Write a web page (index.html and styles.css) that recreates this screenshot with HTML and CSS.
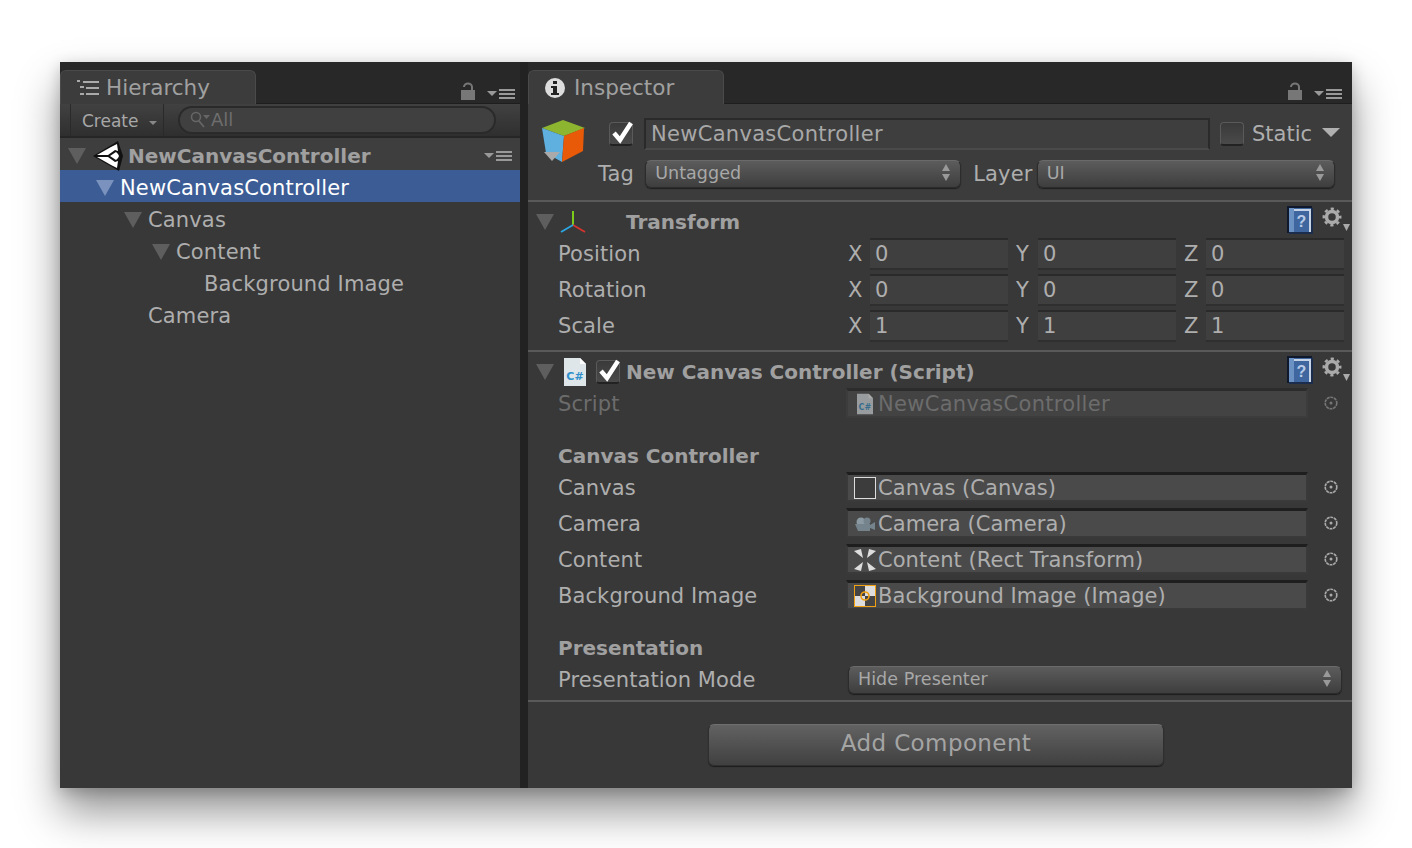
FILE: index.html
```html
<!DOCTYPE html>
<html lang="en">
<head>
    <meta charset="UTF-8">
    <title>Unity Inspector</title>
    <link rel="stylesheet" href="styles.css">
</head>
<body>

<svg class="sprites" width="0" height="0">
    <symbol id="lock" viewBox="0 0 16 18">
        <path d="M4 5a4 3.500 0 0 1 8 0v3" fill="none" stroke="#777" stroke-width="2"/>
        <rect x="1" y="8" width="14" height="10" fill="#777"/>
    </symbol>
    <symbol id="menu" viewBox="0 0 28 12">
        <path d="M0 3h10l-5 5z" fill="#999"/>
        <path d="M12 1h16v2H12zM12 5h16v2H12zM12 9h16v2H12z" fill="#999"/>
    </symbol>
    <symbol id="help" viewBox="0 0 26 28">
        <rect x="0" y="0" width="25" height="27" fill="#10192c"/>
        <rect x="2" y="2" width="24" height="26" fill="#1c2c4c"/>
        <rect x="2" y="2" width="22" height="24" fill="#3f669f"/>
        <rect x="2" y="2" width="5" height="24" fill="#6c92c4"/>
        <path d="M7 3h17v2H7z" fill="#c7d4e6"/>
        <rect x="22" y="3" width="2" height="23" fill="#c7d4e6"/>
        <text x="14.500" y="21" font-family="Liberation Sans" font-size="16" font-weight="bold" text-anchor="middle" fill="#b9cbe6">?</text>
    </symbol>
    <symbol id="gear" viewBox="0 0 28 26">
        <circle cx="10" cy="10" r="5.500" fill="none" stroke="#aaa" stroke-width="3.500"/>
        <circle cx="10" cy="10" r="8.200" fill="none" stroke="#aaa" stroke-width="2.500" stroke-dasharray="3.220 3.220" stroke-dashoffset="1.600"/>
        <path d="M21 17h7l-3.500 7z" fill="#aaa"/>
    </symbol>
    <symbol id="csfile" viewBox="0 0 22 28">
        <path d="M0 0h16l6 6v22H0z" fill="#dfe6ea"/>
        <path d="M16 0l6 6h-6z" fill="#fff"/>
        <text x="11" y="22" font-family="DejaVu Sans" font-size="11" font-weight="bold" text-anchor="middle" fill="#2f8fca">C#</text>
    </symbol>
    <symbol id="target" viewBox="0 0 14 14">
        <circle cx="7" cy="7" r="5.800" fill="none" stroke="#aaa" stroke-width="1.600" stroke-dasharray="3 .7"/>
        <circle cx="7" cy="7" r="1.500" fill="#aaa"/>
    </symbol>
    <symbol id="tick" viewBox="0 0 26 26">
        <path d="M5 13l6 7L22 3" fill="none" stroke="#fff" stroke-width="4.500"/>
    </symbol>
    <symbol id="updown" viewBox="0 0 10 18">
        <path d="M5 0l4 7H1zM1 10h8l-4 7z" fill="#999"/>
    </symbol>
</svg>

<div class="window">
    <section class="panel hierarchy">
        <div class="tabbar">
            <div class="tab tab-hierarchy">
                <svg class="tab-icon" viewBox="0 0 22 16" width="22" height="16">
                    <path d="M0 0h3v2H0zM3 6h4v2H3zM3 13h4v2H3z" fill="#aaa"/>
                    <path d="M6 1h16v2H6zM9 7h13v2H9zM9 13h13v2H9z" fill="#aaa"/>
                </svg>
                Hierarchy
            </div>
            <div class="tab-tools">
                <svg class="lock" width="16" height="18"><use href="#lock"/></svg>
                <svg class="menu" width="28" height="12"><use href="#menu"/></svg>
            </div>
        </div>
        <div class="toolbar">
            <div class="create">Create <span class="small-arrow"></span></div>
            <div class="search">
                <svg class="search-icon" viewBox="0 0 22 18" width="22" height="18">
                    <circle cx="7" cy="7" r="4.500" fill="none" stroke="#666" stroke-width="1.600"/>
                    <path d="M10 11l5 6" stroke="#666" stroke-width="1.800"/>
                    <path d="M14 5h7l-3.500 4z" fill="#666"/>
                </svg>
                All
            </div>
        </div>
        <div class="scene-row">
            <span class="arrow"></span>
            <svg class="unity-logo" viewBox="0 0 30 30" width="30" height="30">
                <path d="M0 15L25 0l5 15-4 15z" fill="#111"/>
                <path d="M4 14L18 6l6-3 1 7-3-1-7 5zM4 16h11l7 5 3-1-1 7-6-3zM17 15l6-4 2 2 1 2-1 2-2 2z" fill="#fff"/>
            </svg>
            <span class="scene-name">NewCanvasController</span>
            <svg class="menu" width="28" height="12"><use href="#menu"/></svg>
        </div>
        <div class="tree-row selected depth-1"><span class="arrow"></span>NewCanvasController</div>
        <div class="tree-row depth-2"><span class="arrow"></span>Canvas</div>
        <div class="tree-row depth-3"><span class="arrow"></span>Content</div>
        <div class="tree-row depth-4">Background Image</div>
        <div class="tree-row depth-2 leaf">Camera</div>
    </section>

    <section class="panel inspector">
        <div class="tabbar">
            <div class="tab tab-inspector">
                <svg class="tab-icon" viewBox="0 0 20 20" width="20" height="20">
                    <circle cx="10" cy="10" r="10" fill="#ddd"/>
                    <path d="M8 3h4v3H8zM6 8h6v7h2v2H6v-2h2v-5H6z" fill="#222"/>
                </svg>
                Inspector
            </div>
            <div class="tab-tools">
                <svg class="lock" width="16" height="18"><use href="#lock"/></svg>
                <svg class="menu" width="28" height="12"><use href="#menu"/></svg>
            </div>
        </div>

        <div class="object-head">
            <svg class="cube" viewBox="0 0 44 44" width="44" height="44">
                <path d="M1 8L22 0l22 8-21 8z" fill="#8db52f"/>
                <path d="M1 8l22 8-2 26L5 33z" fill="#5fb0df"/>
                <path d="M23 16L43 8l-1 23-21 11z" fill="#e85a08"/>
                <path d="M3 32h16l-8 9z" fill="#aaa"/>
            </svg>
            <div class="head-lines">
                <div class="head-line">
                    <span class="check on"><svg width="26" height="26"><use href="#tick"/></svg></span>
                    <div class="name-field">NewCanvasController</div>
                    <span class="check"></span>
                    <span class="static-label">Static</span>
                    <span class="static-arrow"></span>
                </div>
                <div class="head-line tag-line">
                    <span class="tag-label">Tag</span>
                    <div class="dropdown tag-drop">Untagged<svg width="10" height="18"><use href="#updown"/></svg></div>
                    <span class="layer-label">Layer</span>
                    <div class="dropdown layer-drop">UI<svg width="10" height="18"><use href="#updown"/></svg></div>
                </div>
            </div>
        </div>

        <div class="component transform">
            <div class="comp-title">
                <span class="arrow"></span>
                <svg class="axes" viewBox="0 0 28 24" width="28" height="24">
                    <path d="M14 1v14" stroke="#7ccb1a" stroke-width="2"/>
                    <path d="M14 15L26 22" stroke="#d4342c" stroke-width="2"/>
                    <path d="M14 15L2 22" stroke="#2ba4e0" stroke-width="2"/>
                </svg>
                <span class="comp-name">Transform</span>
                <svg class="help" width="26" height="28"><use href="#help"/></svg>
                <svg class="gear" width="28" height="26"><use href="#gear"/></svg>
            </div>
            <div class="xyz-row">
                <span class="label">Position</span>
                <div class="xyz"><span>X</span><div class="num">0</div><span>Y</span><div class="num">0</div><span>Z</span><div class="num">0</div></div>
            </div>
            <div class="xyz-row">
                <span class="label">Rotation</span>
                <div class="xyz"><span>X</span><div class="num">0</div><span>Y</span><div class="num">0</div><span>Z</span><div class="num">0</div></div>
            </div>
            <div class="xyz-row">
                <span class="label">Scale</span>
                <div class="xyz"><span>X</span><div class="num">1</div><span>Y</span><div class="num">1</div><span>Z</span><div class="num">1</div></div>
            </div>
        </div>

        <div class="component script">
            <div class="comp-title">
                <span class="arrow"></span>
                <svg class="cs-icon" width="22" height="28"><use href="#csfile"/></svg>
                <span class="check on"><svg width="26" height="26"><use href="#tick"/></svg></span>
                <span class="comp-name">New Canvas Controller (Script)</span>
                <svg class="help" width="26" height="28"><use href="#help"/></svg>
                <svg class="gear" width="28" height="26"><use href="#gear"/></svg>
            </div>
            <div class="obj-row script-row disabled">
                <span class="label">Script</span>
                <div class="obj-field">
                    <svg class="field-icon" width="16" height="22"><use href="#csfile"/></svg>
                    NewCanvasController
                </div>
                <svg class="target" width="14" height="14"><use href="#target"/></svg>
            </div>

            <h3 class="group-head first">Canvas Controller</h3>
            <div class="obj-row">
                <span class="label">Canvas</span>
                <div class="obj-field"><span class="canvas-box"></span>Canvas (Canvas)</div>
                <svg class="target" width="14" height="14"><use href="#target"/></svg>
            </div>
            <div class="obj-row">
                <span class="label">Camera</span>
                <div class="obj-field">
                    <svg class="field-icon" viewBox="0 0 22 16" width="22" height="16">
                        <circle cx="7" cy="6" r="4.500" fill="#8a99a2"/>
                        <circle cx="13" cy="5" r="3.500" fill="#74838c"/>
                        <path d="M1 8h15v7H4zM16 9l5-3v8l-5-2z" fill="#74838c"/>
                    </svg>
                    Camera (Camera)
                </div>
                <svg class="target" width="14" height="14"><use href="#target"/></svg>
            </div>
            <div class="obj-row">
                <span class="label">Content</span>
                <div class="obj-field">
                    <svg class="field-icon" viewBox="0 0 22 22" width="22" height="22">
                        <path d="M0 2l7-2 2 9zM22 2l-7-2-2 9zM0 20l7 2 2-9zM22 20l-7 2-2-9z" fill="#ddd"/>
                    </svg>
                    Content (Rect Transform)
                </div>
                <svg class="target" width="14" height="14"><use href="#target"/></svg>
            </div>
            <div class="obj-row">
                <span class="label">Background Image</span>
                <div class="obj-field">
                    <svg class="field-icon" viewBox="0 0 22 22" width="22" height="22">
                        <rect width="22" height="22" fill="#ddd"/>
                        <path d="M0 0h11v11H0zM11 11h11v11H11z" fill="#444"/>
                        <rect x=".5" y=".5" width="21" height="21" fill="none" stroke="#f0a010"/>
                        <circle cx="11" cy="11" r="4" fill="none" stroke="#f0a010" stroke-width="1.600"/>
                    </svg>
                    Background Image (Image)
                </div>
                <svg class="target" width="14" height="14"><use href="#target"/></svg>
            </div>

            <h3 class="group-head second">Presentation</h3>
            <div class="mode-row">
                <span class="label">Presentation Mode</span>
                <div class="dropdown mode-drop">Hide Presenter<svg width="10" height="18"><use href="#updown"/></svg></div>
            </div>
        </div>

        <div class="add-wrap">
            <button class="add-btn">Add Component</button>
        </div>
    </section>
</div>

</body>
</html>
```

FILE: styles.css
```css
* {
    box-sizing: border-box;
}

body {
    margin: 0;
    height: 848px;
    padding: 62px 60px 0;
    background: #fff;
    overflow: hidden;
    font-family: 'DejaVu Sans', sans-serif;
    font-size: 21px;
    color: #aeaeae;
}

.sprites {
    display: none;
}

.window {
    display: flex;
    width: 1292px;
    height: 726px;
    background: #222;
    box-shadow: 0 24px 40px rgba(0, 0, 0, 0.42), 0 4px 14px rgba(0, 0, 0, 0.2);
}

.panel {
    background: #383838;
}

.hierarchy {
    flex: none;
    width: 460px;
    margin-right: 8px;
}

.inspector {
    flex: none;
    width: 824px;
}

.tabbar {
    height: 42px;
    display: flex;
    justify-content: space-between;
    background: #282828;
    border-bottom: 1px solid #1e1e1e;
}

.tab {
    display: flex;
    align-items: center;
    margin-top: 8px;
    height: 34px;
    background: #3c3c3c;
    border: 1px solid #4a4a4a;
    border-bottom: none;
    border-radius: 6px 6px 0 0;
    font-size: 21.500px;
    color: #a0a0a0;
}

.tab-hierarchy {
    width: 196px;
    padding-left: 16px;
}

.tab-inspector {
    width: 196px;
    padding-left: 16px;
}

.tab-hierarchy .tab-icon {
    margin-right: 7px;
}

.tab-inspector .tab-icon {
    margin-right: 9px;
}

.tab-tools {
    display: flex;
    align-items: flex-end;
    padding: 0 10px 3px 0;
    gap: 11px;
}

.hierarchy .tab-tools {
    padding-right: 5px;
}

.menu {
    display: block;
}

.toolbar {
    height: 34px;
    display: flex;
    align-items: center;
    background: linear-gradient(#414141, #2f2f2f);
    border-bottom: 2px solid #262626;
}

.create {
    display: flex;
    align-items: center;
    height: 32px;
    margin-left: 10px;
    width: 94px;
    padding: 2px 0 0 11px;
    border-left: 1px solid #2a2a2a;
    border-right: 1px solid #2a2a2a;
    font-size: 17px;
    color: #a8a8a8;
}

.small-arrow {
    width: 0;
    height: 0;
    margin: 4px 0 0 10px;
    border-left: 4px solid transparent;
    border-right: 4px solid transparent;
    border-top: 4px solid #888;
}

.search {
    display: flex;
    align-items: center;
    height: 28px;
    width: 318px;
    margin-left: 14px;
    padding: 0 0 2px 9px;
    background: #404040;
    border: 2px solid #2a2a2a;
    border-radius: 14px;
    font-size: 18px;
    color: #6e6e6e;
}

.arrow {
    flex: none;
    display: inline-block;
    width: 0;
    height: 0;
    border-left: 9px solid transparent;
    border-right: 9px solid transparent;
    border-top: 16px solid #5e5e5e;
}

.scene-row {
    height: 32px;
    display: flex;
    align-items: center;
    padding: 4px 8px 0;
    background: #3e3e3e;
    font-weight: bold;
    font-size: 20px;
    color: #a0a0a0;
}

.unity-logo {
    margin: 0 5px 0 7px;
}

.scene-name {
    flex: 1;
}

.tree-row {
    height: 32px;
    display: flex;
    align-items: center;
    padding-top: 4px;
    white-space: nowrap;
    letter-spacing: 0.15px;
}

.tree-row .arrow {
    margin-right: 6px;
}

.selected {
    background: #3c5c96;
    color: #fff;
}

.selected .arrow {
    border-top-color: #7a92bd;
}

.depth-1 { padding-left: 36px; }
.depth-2 { padding-left: 64px; }
.depth-3 { padding-left: 92px; }
.depth-4 { padding-left: 144px; }
.leaf { padding-left: 88px; }

.object-head {
    height: 98px;
    display: flex;
    background: #3c3c3c;
    border-bottom: 2px solid #595959;
    padding: 14px 0 0 13px;
}

.cube {
    flex: none;
    margin-top: 2px;
}

.head-lines {
    flex: 1;
    margin-left: 13px;
}

.head-line {
    display: flex;
    align-items: center;
    height: 32px;
}

.check {
    flex: none;
    position: relative;
    display: block;
    width: 24px;
    height: 24px;
    background: linear-gradient(#3a3a3a, #4a4a4a);
    border: 1px solid #5a5a5a;
    border-bottom: 2px solid #222;
    border-radius: 4px;
}

.check svg {
    position: absolute;
    left: -1px;
    top: -3px;
}

.head-line .check.on {
    margin-left: 11px;
}

.name-field {
    width: 566px;
    height: 32px;
    margin-left: 11px;
    padding-left: 5px;
    background: #3e3e3e;
    border: 2px solid #2a2a2a;
    border-bottom-color: #4a4a4a;
    line-height: 28px;
    letter-spacing: 0.3px;
    color: #a8a8a8;
}

.head-line .check:not(.on) {
    margin-left: 10px;
}

.static-label {
    margin-left: 8px;
}

.static-arrow {
    width: 0;
    height: 0;
    margin: 0 0 4px 10px;
    border-left: 9px solid transparent;
    border-right: 9px solid transparent;
    border-top: 9px solid #b0b0b0;
}

.tag-line {
    margin-top: 8px;
}

.tag-label,
.layer-label {
    letter-spacing: 0.2px;
    padding-bottom: 1px;
}

.dropdown {
    display: flex;
    align-items: center;
    justify-content: space-between;
    height: 28px;
    padding: 0 9px 2px 9px;
    background: linear-gradient(#5c5c5c, #3e3e3e);
    border: 1px solid #2c2c2c;
    border-top-color: #6a6a6a;
    border-radius: 6px;
    box-shadow: 0 1px 1px rgba(0, 0, 0, 0.5);
    font-size: 17.500px;
    letter-spacing: 0.05px;
    color: #a8a8a8;
}

.tag-drop {
    width: 316px;
    margin-left: 11px;
}

.layer-label {
    margin-left: 12px;
}

.layer-drop {
    width: 298px;
    margin-left: 4px;
}

.comp-title {
    height: 36px;
    display: flex;
    align-items: center;
    padding: 4px 0 0 8px;
    font-size: 20px;
    font-weight: bold;
    color: #a0a0a0;
}

.comp-title .help {
    margin: -4px 0 0 auto;
}

.comp-title .gear {
    margin: -4px 2px 0 9px;
}

.axes {
    margin-left: 5px;
}

.transform .comp-name {
    margin-left: 39px;
}

.transform {
    height: 150px;
    border-bottom: 2px solid #595959;
}

.xyz-row {
    display: flex;
    align-items: center;
    height: 32px;
    margin-bottom: 4px;
    padding-left: 30px;
}

.label {
    flex: none;
    width: 290px;
    white-space: nowrap;
    letter-spacing: 0.1px;
}

.xyz {
    display: grid;
    grid-template-columns: 22px 146px 22px 146px 22px 146px;
    margin-right: 8px;
}

.xyz span {
    line-height: 32px;
}

.num {
    width: 138px;
    height: 32px;
    padding-left: 5px;
    background: #3f3f3f;
    border-top: 2px solid #2a2a2a;
    border-bottom: 2px solid #2f2f2f;
    line-height: 28px;
}

.script {
    height: 350px;
    border-bottom: 2px solid #595959;
}

.cs-icon {
    margin-left: 10px;
}

.script .check {
    margin-left: 10px;
    margin-right: 6px;
}

.obj-row {
    display: flex;
    align-items: center;
    height: 30px;
    margin-bottom: 6px;
    padding-left: 30px;
}

.obj-row .label {
    width: 288px;
    padding-top: 1px;
}

.obj-field {
    display: flex;
    align-items: center;
    width: 462px;
    height: 30px;
    padding-left: 6px;
    background: #4a4a4a;
    border: solid #3a3a3a;
    border-width: 3px 2px 2px;
    border-top-color: #1e1e1e;
    letter-spacing: 0.05px;
    white-space: nowrap;
    color: #aeaeae;
}

.field-icon {
    flex: none;
    width: 22px;
    margin-right: 2px;
}

.canvas-box {
    flex: none;
    width: 22px;
    height: 22px;
    margin-right: 2px;
    background: #3c3c3c;
    border: 1px solid #ddd;
}

.target {
    margin-left: 16px;
}

.disabled {
    color: #6c6c6c;
}

.disabled .obj-field {
    background: #434343;
    border-color: #3c3c3c;
    border-top-color: #2c2c2c;
    letter-spacing: 0.3px;
    color: #6c6c6c;
}

.disabled .field-icon {
    width: 16px;
    margin: 0 5px 0 3px;
    opacity: 0.55;
}

.disabled .target {
    opacity: 0.55;
}

.group-head {
    margin: 0;
    padding-left: 30px;
    height: 30px;
    line-height: 30px;
    font-size: 20px;
    font-weight: bold;
    color: #a0a0a0;
}

.group-head.first {
    margin-top: 23px;
    margin-bottom: 1px;
}

.group-head.second {
    margin-top: 23px;
    margin-bottom: 3px;
}

.mode-row {
    display: flex;
    align-items: center;
    height: 28px;
    padding-left: 30px;
}

.mode-drop {
    width: 494px;
}

.add-wrap {
    display: flex;
    padding: 22px 0 0 180px;
}

.add-btn {
    width: 456px;
    height: 42px;
    padding: 0 0 5px;
    background: linear-gradient(#626262, #404040);
    border: 1px solid #2f2f2f;
    border-top-color: #6f6f6f;
    border-radius: 6px;
    box-shadow: 0 1px 1px rgba(0, 0, 0, 0.5);
    font-family: 'DejaVu Sans', sans-serif;
    font-size: 23px;
    letter-spacing: 0.4px;
    color: #a4a4a4;
}
```
